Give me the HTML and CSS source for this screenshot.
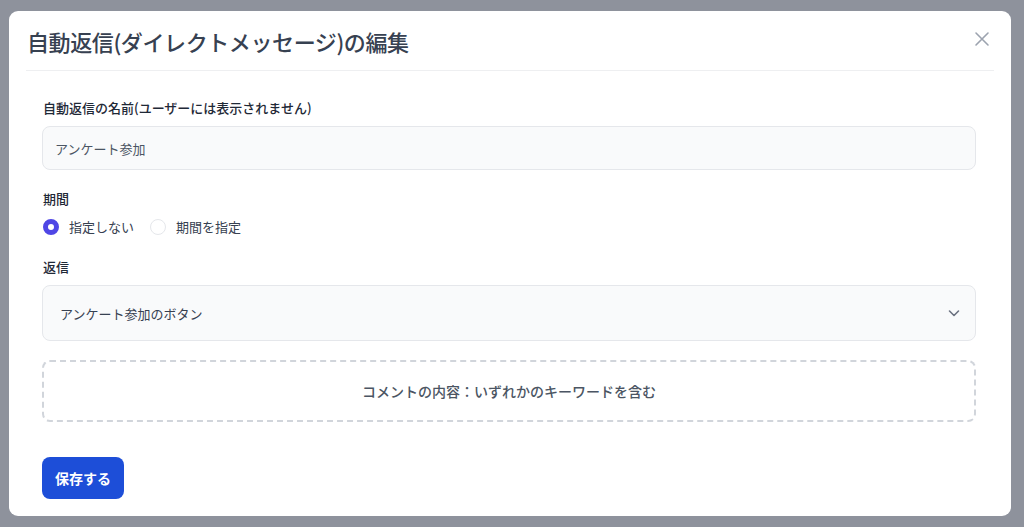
FILE: index.html
```html
<!DOCTYPE html>
<html lang="ja">
<head>
    <meta charset="UTF-8">
    <meta name="viewport" content="width=device-width, initial-scale=1.0">
    <title>自動返信の編集</title>
    <link rel="stylesheet" href="styles.css">
</head>
<body>
    <div class="modal">
        <div class="modal-header">
            <h2>自動返信(ダイレクトメッセージ)の編集</h2>
            <button class="close-btn" aria-label="閉じる">
                <svg width="16" height="16" viewBox="0 0 16 16" fill="none" stroke="currentColor" stroke-width="1.6" stroke-linecap="round">
                    <path d="M2 2 L14 14 M14 2 L2 14"/>
                </svg>
            </button>
        </div>

        <div class="modal-body">
            <div class="field">
                <label for="name">自動返信の名前(ユーザーには表示されません)</label>
                <input id="name" type="text" value="アンケート参加">
            </div>

            <div class="field">
                <label>期間</label>
                <div class="radio-group">
                    <label class="radio"><span class="dot checked"></span>指定しない</label>
                    <label class="radio"><span class="dot"></span>期間を指定</label>
                </div>
            </div>

            <div class="field">
                <label for="reply">返信</label>
                <div class="select">
                    <span>アンケート参加のボタン</span>
                    <svg width="14" height="14" viewBox="0 0 14 14" fill="none" stroke="#6b7280" stroke-width="1.6" stroke-linecap="round" stroke-linejoin="round">
                        <path d="M2.5 5 L7 9.5 L11.5 5"/>
                    </svg>
                </div>
            </div>

            <div class="condition">コメントの内容：いずれかのキーワードを含む</div>

            <button class="save-btn">保存する</button>
        </div>
    </div>
</body>
</html>
```

FILE: styles.css
```css
body {
    font-family: "Noto Sans CJK JP", "Noto Sans", sans-serif;
    background: #8e929c;
    margin: 0;
    padding: 11px 13px 11px 9px;
    height: 527px;
    box-sizing: border-box;
    overflow: hidden;
}

.modal {
    background: #ffffff;
    border-radius: 9px;
    height: 505px;
    box-sizing: border-box;
    display: flex;
    flex-direction: column;
}

.modal-header {
    display: flex;
    align-items: center;
    justify-content: space-between;
    height: 60px;
    margin: 0 17px;
    padding-left: 1px;
    border-bottom: 1px solid #eeeff1;
    box-sizing: border-box;
}

.modal-header h2 {
    margin: 0;
    font-size: 22px;
    font-weight: 500;
    color: #374151;
    letter-spacing: -0.4px;
}

.close-btn {
    background: none;
    border: none;
    padding: 0;
    margin-right: 4px;
    margin-top: -3px;
    color: #9ca3af;
    display: flex;
    cursor: pointer;
}

.modal-body {
    padding: 27px 35px 0 33px;
    display: flex;
    flex-direction: column;
}

.field {
    display: flex;
    flex-direction: column;
    margin-bottom: 19px;
}

.field > label {
    font-size: 13px;
    font-weight: 500;
    color: #1f2937;
    margin-bottom: 9px;
    margin-left: 1px;
}

input {
    height: 44px;
    border: 1px solid #e5e7eb;
    border-radius: 8px;
    background: #f9fafb;
    padding: 0 12px;
    font-family: inherit;
    font-size: 13px;
    color: #4b5563;
    box-sizing: border-box;
}

.radio-group {
    display: flex;
    gap: 15px;
    margin-bottom: 2px;
}

.radio {
    display: flex;
    align-items: center;
    gap: 10px;
    font-size: 13px;
    color: #374151;
    margin-left: 1px;
}

.dot {
    width: 16px;
    height: 16px;
    border-radius: 50%;
    border: 1px solid #e5e7eb;
    box-sizing: border-box;
    background: #fff;
}

.dot.checked {
    border: 5px solid #4f46e5;
}

.select {
    height: 56px;
    border: 1px solid #e5e7eb;
    border-radius: 8px;
    background: #f9fafb;
    padding: 0 14px 0 17px;
    display: flex;
    align-items: center;
    justify-content: space-between;
    font-size: 13px;
    color: #374151;
    box-sizing: border-box;
}

.condition {
    height: 62px;
    border: 2px dashed #d1d5db;
    border-radius: 8px;
    display: flex;
    align-items: center;
    justify-content: center;
    font-size: 14px;
    font-weight: 500;
    color: #4b5563;
    box-sizing: border-box;
}

.save-btn {
    align-self: flex-start;
    margin-top: 35px;
    height: 42px;
    padding: 0 13px;
    background: #1d4ed8;
    color: #fff;
    border: none;
    border-radius: 8px;
    font-family: inherit;
    font-size: 14px;
    font-weight: 700;
    cursor: pointer;
}
```
